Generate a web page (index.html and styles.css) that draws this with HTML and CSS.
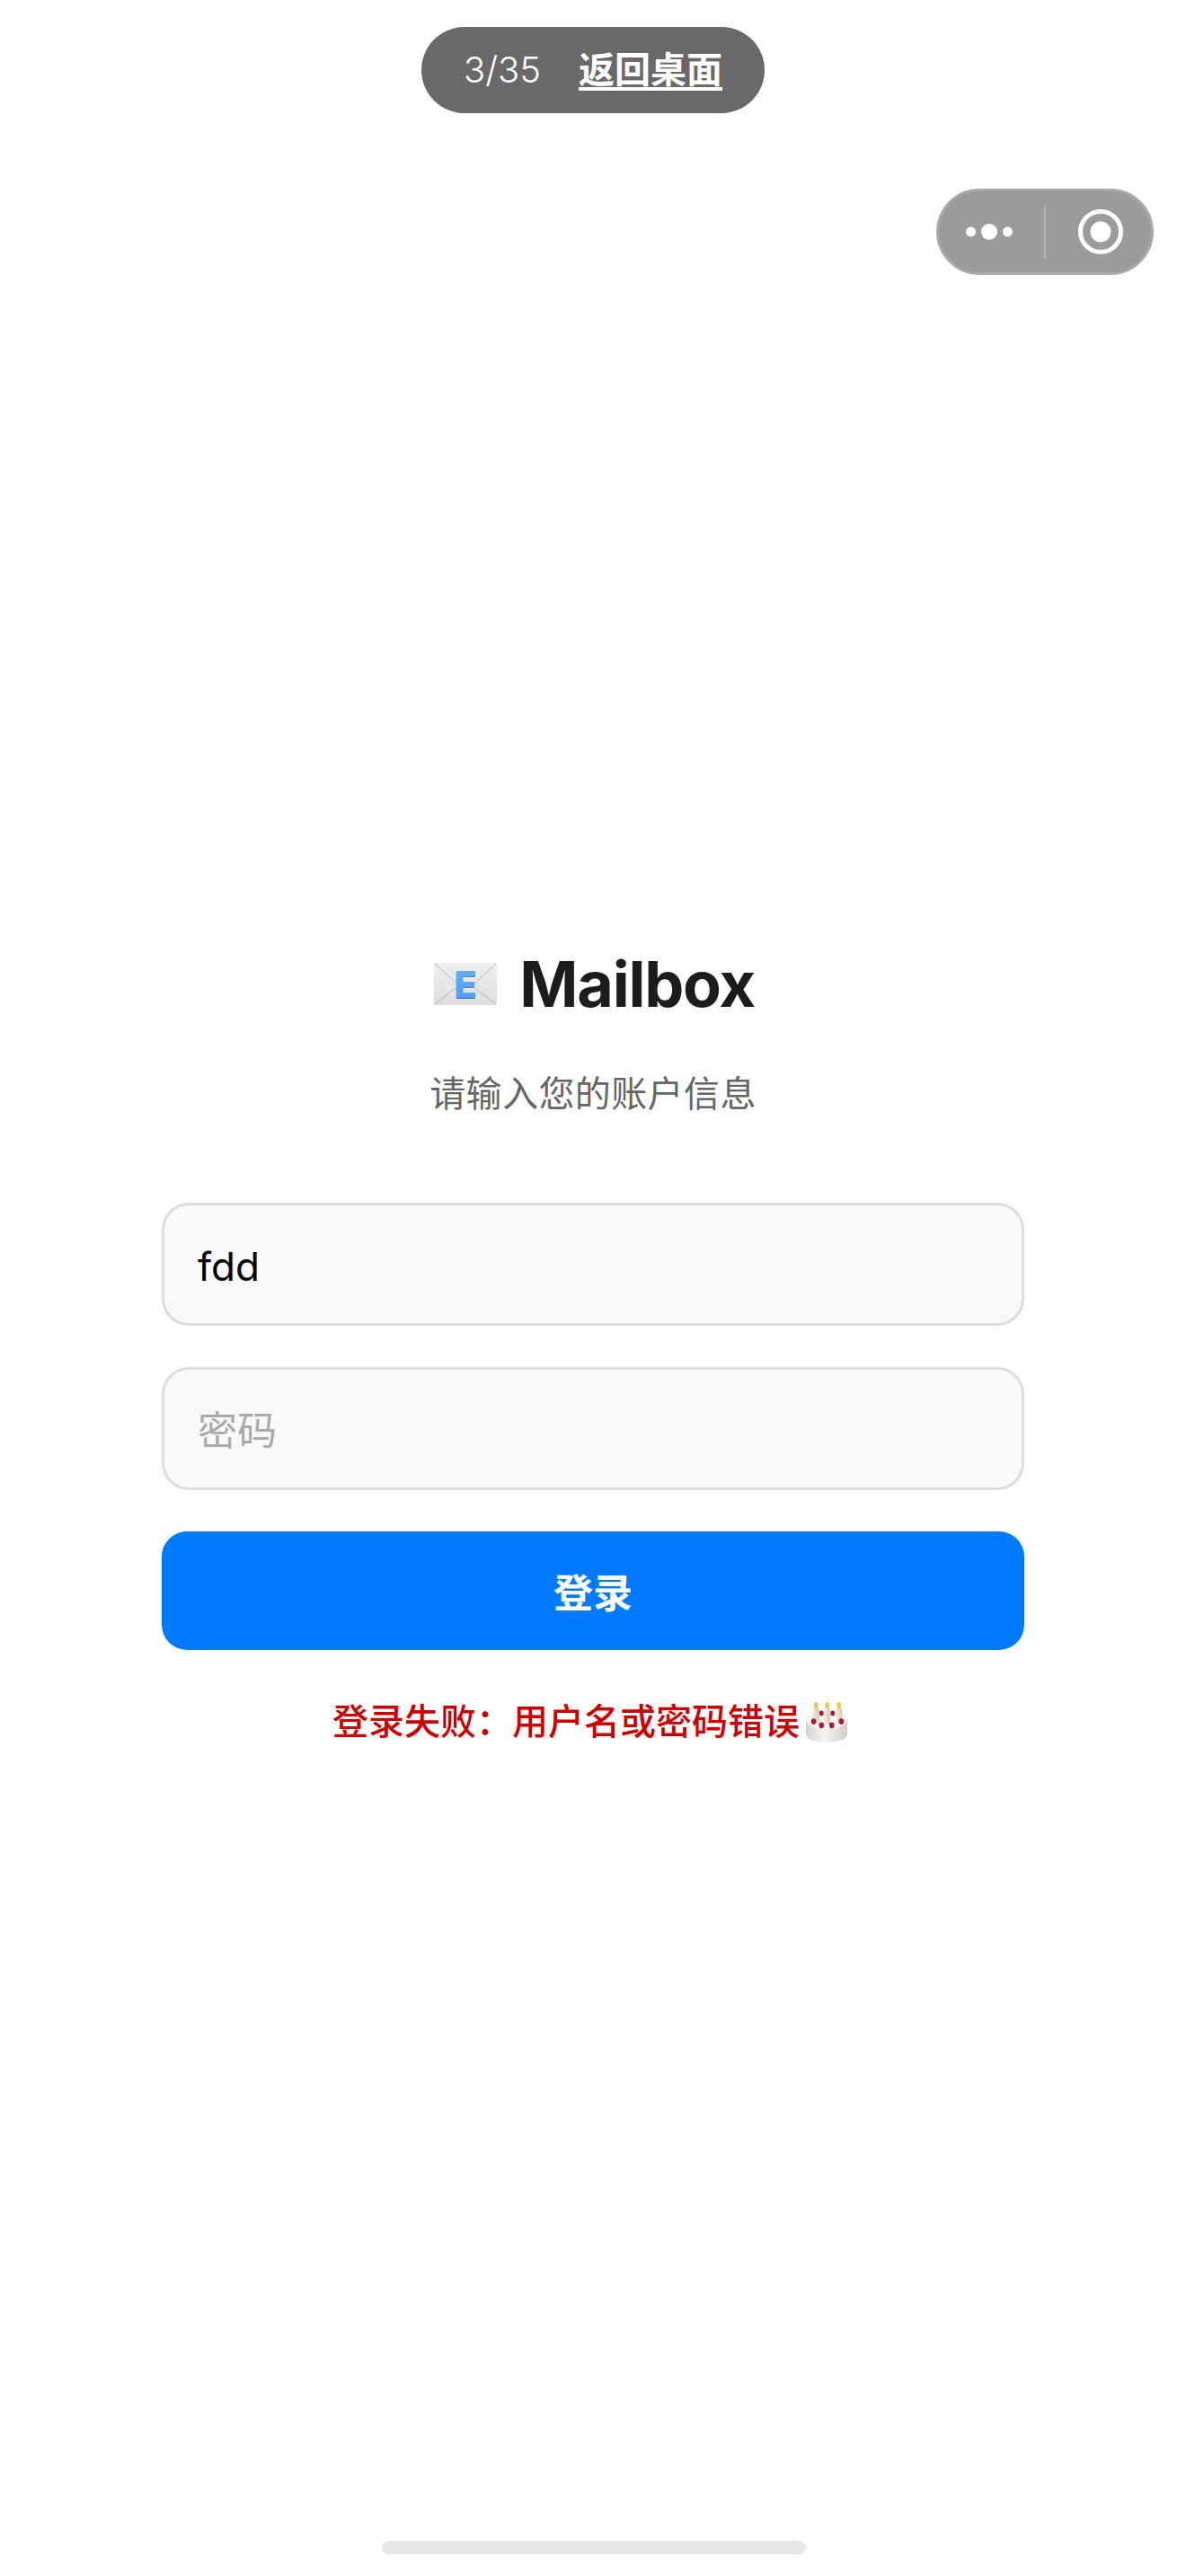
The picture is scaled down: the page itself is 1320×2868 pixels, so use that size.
FILE: index.html
```html
<!DOCTYPE html>
<html lang="zh-CN">
<head>
<meta charset="utf-8">
<title>Mailbox</title>
<link rel="stylesheet" href="styles.css">
</head>
<body>
<div class="progress-pill">
  <span class="progress-count">3/35</span>
  <a class="progress-link">返回桌面</a>
</div>
<div class="capsule">
  <svg class="capsule-dots" viewBox="0 0 52 20"><circle cx="5.500" cy="10" r="5.500"/><circle cx="26" cy="10" r="9"/><circle cx="46.500" cy="10" r="5.500"/></svg>
  <span class="capsule-divider"></span>
  <svg class="capsule-target" viewBox="0 0 50 50"><circle class="ring" cx="25" cy="25" r="22.500"/><circle cx="25" cy="25" r="11.500"/></svg>
</div>
<main class="login">
  <h1 class="title">
    <svg class="envelope" viewBox="0 0 70 56">
      <defs>
        <linearGradient id="env" x1="0" y1="0" x2="0" y2="1"><stop offset="0" stop-color="#f0f0ef"/><stop offset="1" stop-color="#dededd"/></linearGradient>
        <linearGradient id="letter" x1="0" y1="0" x2="0" y2="1"><stop offset="0" stop-color="#66b0ff"/><stop offset="1" stop-color="#4f9af8"/></linearGradient>
      </defs>
      <rect x="0" y="4" width="70" height="47" rx="1.500" fill="url(#env)"/>
      <path d="M1 5 L28 29 M69 5 L42 30 M1 50 L24 32 M69 50 L44 31" stroke="#b5b5b5" stroke-width="1" fill="none"/>
      <text class="envelope-letter" x="35" y="44" fill="#46709f" text-anchor="middle">E</text>
      <text class="envelope-letter" x="35" y="43" fill="url(#letter)" text-anchor="middle">E</text>
    </svg>
    <span>Mailbox</span>
  </h1>
  <p class="subtitle">请输入您的账户信息</p>
  <form class="form">
    <input class="field" type="text" value="fdd" placeholder="用户名">
    <input class="field" type="password" placeholder="密码">
    <button class="submit" type="button">登录</button>
  </form>
  <p class="error">登录失败：用户名或密码错误<svg class="cake" viewBox="0 0 50 47">
      <defs>
        <linearGradient id="cakeBody" x1="0" y1="0" x2="1" y2="0"><stop offset="0" stop-color="#d5d3cf"/><stop offset="0.45" stop-color="#f5f4f1"/><stop offset="1" stop-color="#cfcdc8"/></linearGradient>
        <linearGradient id="candle" x1="0" y1="0" x2="1" y2="0"><stop offset="0" stop-color="#f2efe2"/><stop offset="1" stop-color="#cfcbb8"/></linearGradient>
      </defs>
      <path d="M1 20 V37 C1 50 49 50 49 37 V20 Z" fill="url(#cakeBody)"/>
      <ellipse cx="25" cy="20" rx="24" ry="11" fill="#f7f6f3"/>
      <g fill="#a81c3e"><ellipse cx="19" cy="13" rx="2.500" ry="3"/><ellipse cx="32" cy="13" rx="2.500" ry="3"/></g>
      <g fill="url(#candle)"><rect x="9" y="7" width="7.500" height="16" rx="1.500"/><rect x="22" y="7" width="7.500" height="18" rx="1.500"/><rect x="35.500" y="7" width="7.500" height="16" rx="1.500"/></g>
      <g fill="#eec23c"><ellipse cx="12.700" cy="4" rx="2.200" ry="4"/><ellipse cx="25.700" cy="4" rx="2.200" ry="4"/><ellipse cx="39.200" cy="4" rx="2.200" ry="4"/></g>
      <g fill="#a81c3e"><ellipse cx="10" cy="22.500" rx="3" ry="3.500"/><ellipse cx="42" cy="22.500" rx="3" ry="3.500"/><ellipse cx="19" cy="27" rx="3" ry="3.500"/><ellipse cx="31" cy="27" rx="3" ry="3.500"/></g>
    </svg></p>
</main>
<div class="home-bar"></div>
</body>
</html>
```
FILE: styles.css
```css
* { box-sizing: border-box; }
html, body { margin: 0; height: 2868px; }
body {
  position: relative;
  overflow: hidden;
  background: #fff;
  font-family: Inter, "Noto Sans CJK SC", sans-serif;
}
.progress-pill {
  position: absolute;
  left: 469px;
  top: 30px;
  width: 382px;
  height: 96px;
  border-radius: 48px;
  background: #696969;
  color: #fff;
  display: flex;
  align-items: center;
  justify-content: center;
  gap: 42px;
  font-size: 40px;
  line-height: 48px;
}
.progress-count { font-weight: 300; }
.progress-link { font-weight: 700; text-decoration: underline; text-underline-offset: 5px; }
.capsule {
  position: absolute;
  left: 1042px;
  top: 210px;
  width: 242px;
  height: 96px;
  border-radius: 48px;
  background: #9b9b9b;
  border: 3px solid #a9a9a9;
  display: flex;
  align-items: center;
}
.capsule-dots { width: 52px; height: 20px; margin-left: 30px; fill: #fff; }
.capsule-divider { width: 2px; height: 60px; margin-left: 35px; background: #b1b1b1; }
.capsule-target { width: 50px; height: 50px; margin-left: 36px; fill: #fff; }
.capsule-target .ring { fill: none; stroke: #fff; stroke-width: 5; }
.login {
  width: 960px;
  margin: 0 auto;
  padding-top: 1052px;
  display: flex;
  flex-direction: column;
  align-items: center;
}
.title {
  margin: 0;
  height: 88px;
  padding-left: 3px;
  display: flex;
  align-items: center;
  gap: 25px;
  font-size: 70px;
  line-height: 88px;
  font-weight: 700;
  letter-spacing: -1.2px;
  color: #1c1c1e;
}
.envelope { width: 70px; height: 56px; }
.envelope-letter { font-size: 41px; font-weight: 800; letter-spacing: 0; }
.subtitle {
  margin: 50px 0 0;
  font-size: 40px;
  line-height: 56px;
  letter-spacing: 0.4px;
  color: #666;
}
.form {
  width: 100%;
  margin-top: 93px;
  display: flex;
  flex-direction: column;
  gap: 46px;
}
.field {
  display: block;
  width: 100%;
  height: 137px;
  padding: 4px 37px 0;
  border: 3px solid #ddd;
  border-radius: 30px;
  background: #f9f9f9;
  color: #000;
  font-family: Inter, "Noto Sans CJK SC", sans-serif;
  font-size: 44px;
  outline: none;
}
.field::placeholder { color: #aaa; opacity: 1; }
.submit {
  display: block;
  width: 100%;
  height: 132px;
  border: 0;
  border-radius: 28px;
  background: #007aff;
  color: #fff;
  font-family: Inter, "Noto Sans CJK SC", sans-serif;
  font-size: 44px;
  font-weight: 600;
}
.error {
  margin: 52px 0 0;
  padding-right: 6px;
  display: flex;
  align-items: center;
  font-size: 40px;
  line-height: 56px;
  font-weight: 500;
  color: #c00;
}
.cake { width: 48px; height: 47px; margin-left: 6px; }
.home-bar {
  position: absolute;
  left: 425px;
  top: 2829px;
  width: 472px;
  height: 15px;
  border-radius: 8px;
  background: #e7e7e7;
}
```
